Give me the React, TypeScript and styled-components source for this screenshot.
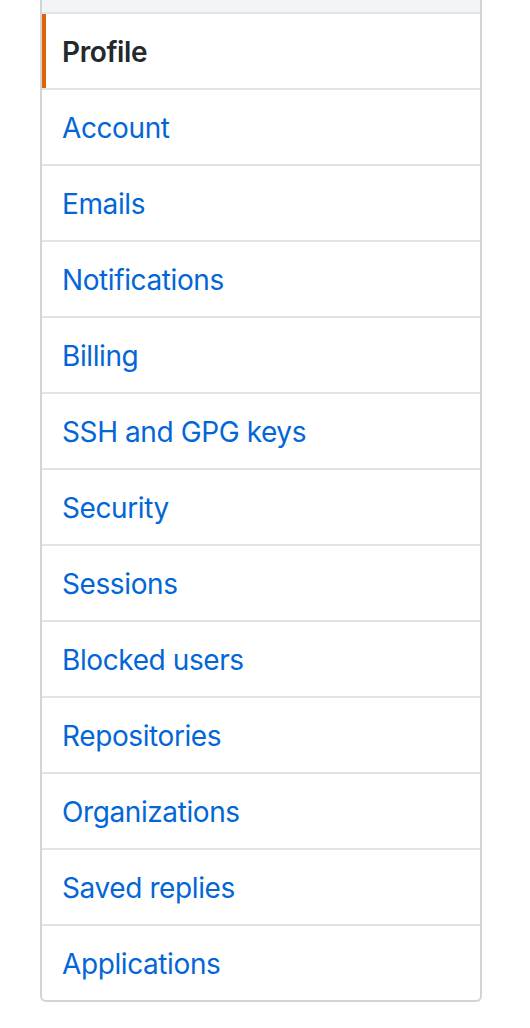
import { createGlobalStyle } from "styled-components";
import styled from "styled-components";

const GlobalStyle = createGlobalStyle`
  html, body {
    margin: 0;
    padding: 0;
    background: #ffffff;
  }
  body {
    font-family: Inter, "Liberation Sans", Arial, sans-serif;
    -webkit-font-smoothing: antialiased;
  }
`;

const Page = styled.div`
  padding: 0 48px 26px 40px;
`;

const Menu = styled.nav`
  width: 442px;
  box-sizing: border-box;
  border: 2px solid #d1d5da;
  border-top: 0;
  border-radius: 0 0 6px 6px;
  background: #fff;
`;

const MenuHeader = styled.div`
  height: 12px;
  background: #f3f4f6;
  border-bottom: 2px solid #e1e4e8;
`;

const MenuItem = styled.a<{ $selected?: boolean }>`
  display: block;
  position: relative;
  padding: 17px 20px 15px;
  font-size: 28px;
  line-height: 42px;
  letter-spacing: -0.4px;
  text-decoration: none;
  color: ${(p) => (p.$selected ? "#24292e" : "#0366d6")};
  font-weight: ${(p) => (p.$selected ? 600 : 400)};
  border-bottom: 2px solid #e1e4e8;
  cursor: pointer;

  &:last-child {
    border-bottom: 0;
  }

  &::before {
    content: "";
    display: ${(p) => (p.$selected ? "block" : "none")};
    position: absolute;
    left: 0;
    top: 0;
    bottom: 0;
    width: 4px;
    background: #e36209;
  }
`;

const items = [
  "Profile",
  "Account",
  "Emails",
  "Notifications",
  "Billing",
  "SSH and GPG keys",
  "Security",
  "Sessions",
  "Blocked users",
  "Repositories",
  "Organizations",
  "Saved replies",
  "Applications",
];

export default function App() {
  return (
    <Page>
      <GlobalStyle />
      <Menu>
        <MenuHeader />
        {items.map((label) => (
          <MenuItem key={label} $selected={label === "Profile"}>
            {label}
          </MenuItem>
        ))}
      </Menu>
    </Page>
  );
}
